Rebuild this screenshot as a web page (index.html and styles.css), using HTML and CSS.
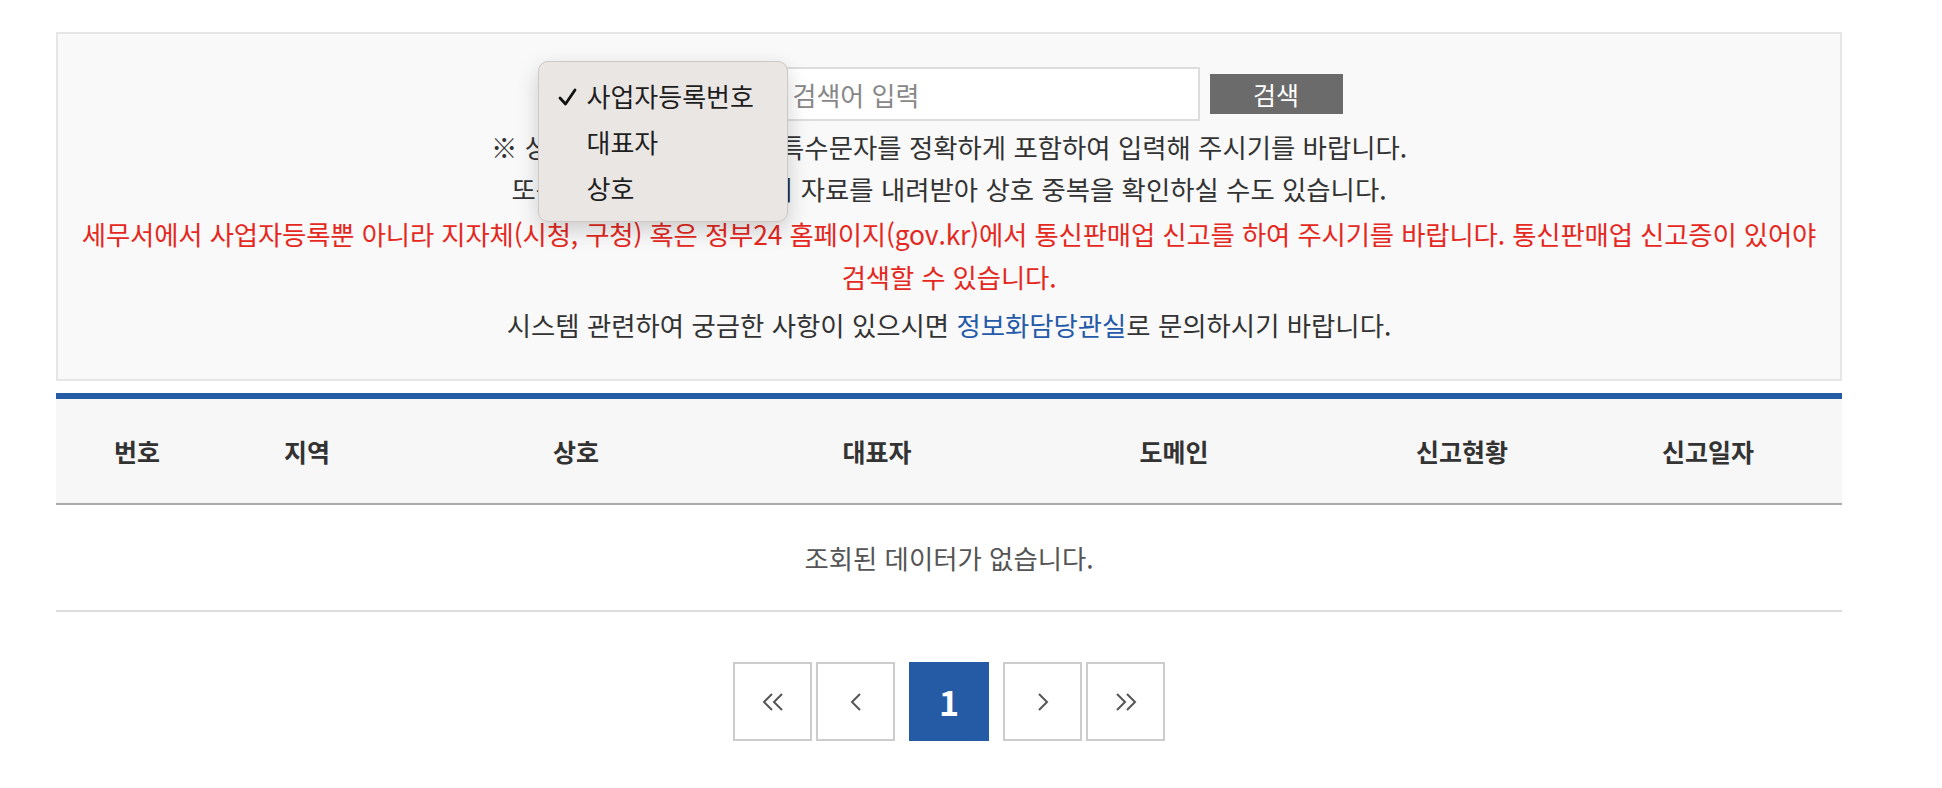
FILE: index.html
```html
<!DOCTYPE html>
<html lang="ko">
<head>
    <meta charset="UTF-8">
    <meta name="viewport" content="width=device-width, initial-scale=1.0">
    <title>통신판매사업자 조회</title>
    <link rel="stylesheet" href="styles.css">
</head>
<body>
    <div class="wrap">
        <div class="search-box">
            <div class="search-row">
                <div class="select-wrap">
                    <select class="search-select">
                        <option>사업자등록번호</option>
                        <option>대표자</option>
                        <option>상호</option>
                    </select>
                    <!-- 열린 선택 목록 -->
                    <ul class="select-popup">
                        <li class="selected">
                            <svg class="check" width="19" height="18" viewBox="0 0 19 18"><path d="M2 10 L7.5 16 L17 2" fill="none" stroke="#111" stroke-width="2.8" stroke-linecap="round" stroke-linejoin="round"/></svg>
                            사업자등록번호
                        </li>
                        <li>대표자</li>
                        <li>상호</li>
                    </ul>
                </div>
                <input type="text" class="search-input" placeholder="검색어 입력">
                <button class="search-btn">검색</button>
            </div>
            <p class="notice">※ 상호 검색 시 띄어쓰기, 특수문자를 정확하게 포함하여 입력해 주시기를 바랍니다.<br>또는 공공데이터포털 등의 자료를 내려받아 상호 중복을 확인하실 수도 있습니다.</p>
            <p class="notice red">세무서에서 사업자등록뿐 아니라 지자체(시청, 구청) 혹은 정부24 홈페이지(gov.kr)에서 통신판매업 신고를 하여 주시기를 바랍니다. 통신판매업 신고증이 있어야 검색할 수 있습니다.</p>
            <p class="notice last">시스템 관련하여 궁금한 사항이 있으시면 <a href="#" class="link">정보화담당관실</a>로 문의하시기 바랍니다.</p>
        </div>

        <table class="list">
            <colgroup>
                <col style="width: 162px">
                <col style="width: 178px">
                <col style="width: 360px">
                <col style="width: 242px">
                <col style="width: 352px">
                <col style="width: 224px">
                <col style="width: 268px">
            </colgroup>
            <thead>
                <tr>
                    <th>번호</th>
                    <th>지역</th>
                    <th>상호</th>
                    <th>대표자</th>
                    <th>도메인</th>
                    <th>신고현황</th>
                    <th>신고일자</th>
                </tr>
            </thead>
            <tbody>
                <tr>
                    <td colspan="7" class="empty">조회된 데이터가 없습니다.</td>
                </tr>
            </tbody>
        </table>

        <div class="paging">
            <a href="#" class="page-btn"><svg width="22" height="18" viewBox="0 0 22 18"><path d="M10 1 L2 9 L10 17 M20 1 L12 9 L20 17" fill="none" stroke="#555" stroke-width="2"/></svg></a>
            <a href="#" class="page-btn"><svg width="12" height="18" viewBox="0 0 12 18"><path d="M10 1 L2 9 L10 17" fill="none" stroke="#555" stroke-width="2"/></svg></a>
            <span class="page-num">1</span>
            <a href="#" class="page-btn"><svg width="12" height="18" viewBox="0 0 12 18"><path d="M2 1 L10 9 L2 17" fill="none" stroke="#555" stroke-width="2"/></svg></a>
            <a href="#" class="page-btn"><svg width="22" height="18" viewBox="0 0 22 18"><path d="M2 1 L10 9 L2 17 M12 1 L20 9 L12 17" fill="none" stroke="#555" stroke-width="2"/></svg></a>
        </div>
    </div>
</body>
</html>
```

FILE: styles.css
```css
body {
    margin: 0;
    background: #fff;
    font-family: "Noto Sans CJK KR", "Noto Sans", sans-serif;
    color: #333;
}
.wrap {
    width: 1786px;
    margin-left: 56px;
    padding-top: 32px;
}
.search-box {
    border: 2px solid #e6e6e6;
    background: #f9f9f9;
    padding: 33px 8px 33px;
    text-align: center;
}
.search-row {
    display: flex;
    justify-content: center;
    align-items: center;
    height: 54px;
}
.select-wrap {
    position: relative;
    width: 210px;
    height: 54px;
    margin-right: 8px;
}
.search-select {
    appearance: none;
    width: 100%;
    height: 54px;
    border: 2px solid #ddd;
    background: #fff;
    font-family: inherit;
    font-size: 24px;
    padding: 0 10px;
}
.select-popup {
    position: absolute;
    top: -6px;
    left: -18px;
    width: 248px;
    margin: 0;
    padding: 11px 0 10px;
    list-style: none;
    background: #e9e6e4;
    border: 1px solid #cbc8c6;
    border-radius: 10px;
    box-shadow: 0 8px 22px rgba(0, 0, 0, 0.18);
    text-align: left;
    z-index: 3;
}
.select-popup li {
    position: relative;
    height: 46px;
    line-height: 46px;
    padding-left: 48px;
    font-size: 26px;
    color: #1e1e1e;
}
.select-popup .check {
    position: absolute;
    left: 19px;
    top: 15px;
}
.search-input {
    box-sizing: border-box;
    width: 426px;
    height: 54px;
    border: 2px solid #ddd;
    background: #fff;
    padding: 0 17px;
    font-family: inherit;
    font-size: 26px;
    color: #333;
    outline: none;
}
.search-input::placeholder {
    color: #888;
}
.search-btn {
    width: 133px;
    height: 40px;
    margin-left: 10px;
    border: none;
    background: #6b6b6b;
    color: #fff;
    font-family: inherit;
    font-size: 25px;
    padding: 0;
    cursor: pointer;
}
.notice {
    margin: 5px 0 0;
    font-size: 26.4px;
    line-height: 42px;
    color: #333;
    word-break: keep-all;
}
.notice.red {
    margin-top: 2px;
    line-height: 43px;
    letter-spacing: -0.15px;
    color: #e5281e;
}
.notice.last {
    line-height: 43px;
    margin-top: 5px;
}
.link {
    color: #255aa8;
    text-decoration: none;
}
.list {
    width: 100%;
    margin-top: 12px;
    border-collapse: collapse;
    table-layout: fixed;
    border-top: 6px solid #255aa5;
}
.list th {
    height: 104px;
    padding: 0;
    background: #f7f7f7;
    border-bottom: 2px solid #aaa;
    font-size: 25px;
    font-weight: bold;
    color: #333;
}
.list td.empty {
    height: 105px;
    padding: 0;
    border-bottom: 2px solid #dcdcdc;
    text-align: center;
    font-size: 26.4px;
    color: #555;
}
.paging {
    display: flex;
    justify-content: center;
    margin-top: 50px;
}
.page-btn {
    box-sizing: border-box;
    display: flex;
    align-items: center;
    justify-content: center;
    width: 79px;
    height: 79px;
    border: 2px solid #ccc;
    background: #fff;
    margin: 0 2px;
}
.page-num {
    display: flex;
    align-items: center;
    justify-content: center;
    width: 80px;
    height: 79px;
    margin: 0 12px;
    background: #255aa5;
    color: #fff;
    font-size: 34px;
    font-weight: bold;
}
```
